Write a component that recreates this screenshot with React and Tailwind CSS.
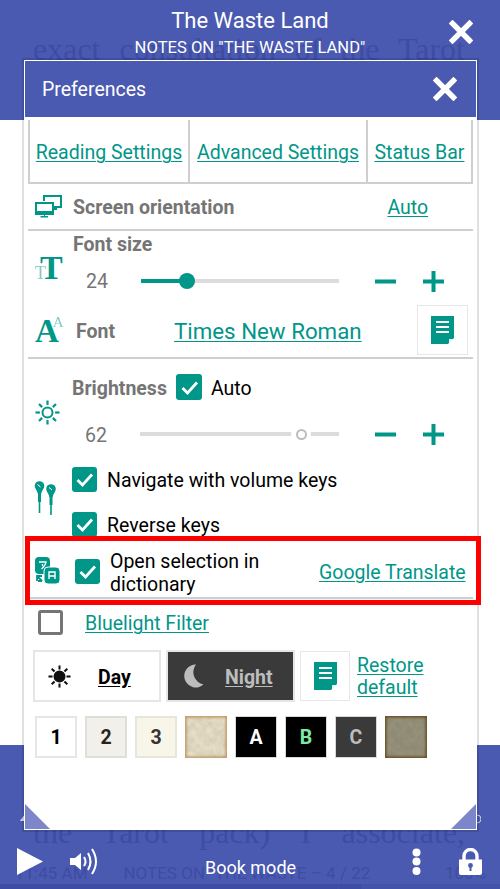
import React from "react";

const TEAL = "#009688";

function XIcon({ size = 24 }) {
  return (
    <svg width={size} height={size} viewBox="0 0 24 24" className="block">
      <path d="M3.5 3.5 L20.5 20.5 M20.5 3.5 L3.5 20.5" stroke="#fff" strokeWidth="5.4" strokeLinecap="square" fill="none" />
    </svg>
  );
}

function Check({ className = "w-[25px] h-[25px]" }) {
  return (
    <span className={`${className} shrink-0 rounded-[3px] bg-[#009688] flex items-center justify-center`}>
      <svg width="19" height="19" viewBox="0 0 19 19">
        <path d="M2.5 10 L7.5 15 L17 4.5" stroke="#fff" strokeWidth="2.8" fill="none" />
      </svg>
    </span>
  );
}

function Minus() {
  return (
    <svg width="21" height="21" viewBox="0 0 21 21" className="block shrink-0">
      <rect x="0" y="8.5" width="21" height="4" fill={TEAL} />
    </svg>
  );
}
function Plus() {
  return (
    <svg width="21" height="21" viewBox="0 0 21 21" className="block shrink-0">
      <path d="M0 8.5H8.5V0H12.5V8.5H21V12.5H12.5V21H8.5V12.5H0Z" fill={TEAL} />
    </svg>
  );
}

function DocIcon() {
  return (
    <svg width="23" height="28" viewBox="0 0 23 28" className="block">
      <path d="M0 0H23V22L17 28H0Z" fill={TEAL} />
      <path d="M5 6H18M5 11H18M5 16H18" stroke="#fff" strokeWidth="2" />
      <path d="M18 28L23 23H18Z" fill="#fff" opacity="0.85" />
    </svg>
  );
}

function Monitors() {
  return (
    <svg width="27" height="23" viewBox="0 0 27 23" className="block">
      <g fill="none" stroke={TEAL} strokeWidth="2">
        <path d="M9 6V1H26V12H19" />
        <rect x="1" y="8" width="17" height="11" fill="#fff" />
        <path d="M19 14H22" />
      </g>
      <path d="M9 19V21H5.5V22.5H13V21H10V19Z" fill={TEAL} />
      <rect x="1" y="16" width="17" height="3" fill={TEAL} />
    </svg>
  );
}

function Sun({ color = TEAL, filled = false, size = 25 }) {
  const rays = [0, 45, 90, 135, 180, 225, 270, 315];
  return (
    <svg width={size} height={size} viewBox="0 0 25 25" className="block">
      <circle cx="12.5" cy="12.5" r={filled ? 5.5 : 5} fill={filled ? color : "none"} stroke={color} strokeWidth="2" />
      {rays.map((a) => (
        <rect key={a} x="11.4" y="0.5" width="2.2" height="4.4" fill={color} transform={`rotate(${a} 12.5 12.5)`} />
      ))}
    </svg>
  );
}

function Earbuds() {
  return (
    <svg width="23" height="36" viewBox="0 0 23 36" className="block">
      <g fill={TEAL}>
        <circle cx="5.5" cy="5" r="4.8" />
        <path d="M2 8H9L7 13H4Z" />
        <rect x="4" y="12" width="3" height="9" />
        <rect x="4.7" y="21" width="1.6" height="11" />
        <circle cx="17" cy="8" r="4.8" />
        <path d="M13.5 11H20.5L18.5 16H15.5Z" />
        <rect x="15.5" y="15" width="3" height="9" />
        <rect x="16.2" y="24" width="1.6" height="10" />
      </g>
      <path d="M3.5 3.5L6.5 6M15 6.5L18 9" stroke="#fff" strokeWidth="1" />
    </svg>
  );
}

function TranslateIcon() {
  return (
    <svg width="25" height="28" viewBox="0 0 25 28" className="block">
      <rect x="0" y="0" width="15" height="17" rx="4" fill={TEAL} />
      <path d="M4 5H11C10.5 8 9 10 6.5 12M7.5 7V9" stroke="#fff" strokeWidth="1.3" fill="none" />
      <rect x="9" y="10" width="16" height="17" rx="4" fill={TEAL} stroke="#fff" strokeWidth="1" />
      <path d="M14 22V15H20V22M14 19H20" stroke="#fff" strokeWidth="1.4" fill="none" />
      <path d="M2 19L7 24M2 24V19H7M7 24H3" stroke={TEAL} strokeWidth="1.8" fill="none" />
    </svg>
  );
}

function Moon() {
  return (
    <svg width="21" height="24" viewBox="0 0 21 24" className="block">
      <path d="M13 0.5A11.5 11.5 0 1 0 20.5 20.5A12.5 12.5 0 0 1 13 0.5Z" fill="#bdbdbd" />
    </svg>
  );
}

function Paper({ dark }) {
  const id = dark ? "pd" : "pl";
  return (
    <svg width="42" height="42" viewBox="0 0 42 42" className="block shrink-0">
      <defs>
        <filter id={id + "f"}>
          <feTurbulence type="fractalNoise" baseFrequency="0.14" numOctaves="4" seed="7" />
          <feColorMatrix values="0 0 0 0 0.45  0 0 0 0 0.38  0 0 0 0 0.25  1.1 0 0 0 -0.3" />
        </filter>
        <filter id={id + "b"}>
          <feGaussianBlur stdDeviation="1.2" />
        </filter>
        <clipPath id={id + "c"}>
          <rect width="42" height="42" />
        </clipPath>
      </defs>
      <g clipPath={`url(#${id}c)`}>
        <rect width="42" height="42" fill={dark ? "#8c8974" : "#e6dfc9"} />
        <rect width="42" height="42" filter={`url(#${id}f)`} opacity="0.6" />
        <rect
          x="0"
          y="0"
          width="42"
          height="42"
          fill="none"
          stroke={dark ? "#634a24" : "#bd9560"}
          strokeWidth="3"
          filter={`url(#${id}b)`}
        />
      </g>
    </svg>
  );
}

function Swatch({ className, children }) {
  return (
    <span className={`w-[42px] h-[42px] shrink-0 flex items-center justify-center text-[19.5px] font-bold ${className}`}>
      {children}
    </span>
  );
}

function Slider({ className, children }) {
  return <div className={`relative h-[4px] ${className}`}>{children}</div>;
}

const link = "text-[#009688] underline underline-offset-[2px] decoration-[1px]";
const label = "text-[19.5px] font-bold text-[#757575]";

export default function App() {
  return (
    <div className="relative w-[500px] h-[889px] overflow-hidden bg-white flex flex-col justify-between font-['Roboto',sans-serif]">
      {/* top bar */}
      <header className="relative h-[120px] bg-[#4a5ab1] text-white flex flex-col items-center">
        <p className="absolute left-[33px] right-[35px] top-[30px] font-['Liberation_Serif',serif] text-[32px] leading-[38px] text-[#3e4ca3] [text-align:justify] [text-align-last:justify]">
          exact consultation of the Tarot
        </p>
        <h1 className="relative mt-[7px] text-[22px] leading-[28px] font-normal">The Waste Land</h1>
        <h2 className="relative mt-[3px] text-[16.6px] leading-[20px] font-normal">NOTES ON "THE WASTE LAND"</h2>
        <span className="absolute left-[449px] top-[20px]">
          <XIcon />
        </span>
      </header>

      {/* bottom bar */}
      <footer className="relative h-[144px] bg-[#4a5ab1]">
        <p className="absolute left-[33px] right-[35px] top-[68px] font-['Liberation_Serif',serif] text-[32px] leading-[38px] text-[#3e4ca3] [text-align:justify] [text-align-last:justify]">
          the Tarot pack) I associate,
        </p>
        <div className="absolute left-[15px] right-[14px] top-[118px] flex text-[17px] leading-[20px] text-[#3e4ca3]">
          <span className="w-[109px]">11:45 AM</span>
          <span className="w-[323px]">NOTES ON "THE WASTE – 4 / 22</span>
          <span>100%</span>
        </div>
        <div className="absolute left-0 right-0 bottom-0 h-[5px] bg-[#4453aa] flex">
          <span className="w-[338px] bg-[#3e4ca3]" />
          <span className="w-[1px]" />
          <span className="w-[22px] bg-[#3e4ca3]" />
        </div>
        <div className="relative pt-[103px] pl-[17px] flex items-start text-white">
          <svg width="26" height="27" viewBox="0 0 26 27" className="block">
            <path d="M0 0L26 13.5L0 27Z" fill="#fff" />
          </svg>
          <svg width="28" height="27" viewBox="0 0 28 27" className="block ml-[27px]">
            <path d="M0 10H5L11 5V22L5 17H0Z" fill="#fff" />
            <g fill="none" stroke="#fff" strokeWidth="2">
              <path d="M14 9Q17 13.5 14 18" />
              <path d="M18 5Q23 13.5 18 22" />
              <path d="M22 1Q30 13.5 22 26" />
            </g>
          </svg>
          <span className="ml-[107px] mt-[8px] text-[18px] leading-[24px]">Book mode</span>
          <svg width="9" height="27" viewBox="0 0 9 27" className="block ml-[116px]">
            <circle cx="4.5" cy="4.5" r="4" fill="#fff" />
            <circle cx="4.5" cy="13.5" r="4" fill="#fff" />
            <circle cx="4.5" cy="23" r="4" fill="#fff" />
          </svg>
          <svg width="23" height="27" viewBox="0 0 23 27" className="block ml-[38px]">
            <path d="M5 12V8A6.5 6.5 0 0 1 18 8V12" fill="none" stroke="#fff" strokeWidth="3.4" />
            <path d="M0 11.5H23V25A2 2 0 0 1 21 27H2A2 2 0 0 1 0 25Z" fill="#fff" />
            <circle cx="11.5" cy="17.5" r="2.4" fill="#4a5ab1" />
            <rect x="10.5" y="18" width="2" height="5" fill="#4a5ab1" />
          </svg>
        </div>
      </footer>

      {/* bits of page controls peeking out from under the dialog */}
      <svg width="5" height="8" viewBox="0 0 5 8" className="absolute left-[20px] top-[814px]">
        <path d="M5 0V7H0Z" fill="#fff" opacity="0.8" />
      </svg>
      <svg width="4" height="10" viewBox="0 0 4 10" className="absolute left-[477px] top-[814px]">
        <path d="M0 1A4 4 0 0 1 0 9" fill="none" stroke="#fff" strokeWidth="1" opacity="0.7" />
      </svg>

      {/* dialog */}
      <section className="absolute left-[24px] top-[60px] w-[453px] h-[770px] bg-white border border-white shadow-[0_0_0_2px_rgba(0,0,0,0.12)] flex flex-col">
        <div className="h-[56px] shrink-0 bg-[#4a5ab1] flex items-center justify-between pl-[17px] pr-[19px] text-white">
          <span className="pt-[2px] text-[19.5px] leading-[24px]">Preferences</span>
          <XIcon />
        </div>

        <div className="flex flex-col px-[3px] pt-[3px] text-[19.5px] leading-[23px]">
          {/* tabs */}
          <div className="h-[64px] flex border-x-2 border-b-2 border-[#cfcfcf]">
            <div className="w-[160px] flex items-center justify-center border-r-2 border-[#cfcfcf]">
              <span className={`${link} pt-[2px]`}>Reading Settings</span>
            </div>
            <div className="w-[178px] flex items-center justify-center border-r-2 border-[#cfcfcf]">
              <span className={`${link} pt-[2px]`}>Advanced Settings</span>
            </div>
            <div className="flex-1 flex items-center justify-center">
              <span className={`${link} pt-[2px]`}>Status Bar</span>
            </div>
          </div>

          {/* orientation */}
          <div className="h-[47px] flex items-center pl-[7px] border-b-2 border-[#cfcfcf]">
            <Monitors />
            <span className={`${label} ml-[11px] pt-[2px]`}>Screen orientation</span>
            <span className={`${link} ml-[153px] pt-[2px]`}>Auto</span>
          </div>

          {/* font size */}
          <div className="h-[74px] flex">
            <div className="w-[45px] pl-[7px] flex items-center">
              <span className="font-['Liberation_Serif',serif] flex items-baseline text-[#009688] leading-none">
                <span className="text-[18px] opacity-50 -mr-[6px]">T</span>
                <span className="text-[34px] font-bold">T</span>
              </span>
            </div>
            <div className="flex flex-col">
              <div className={`${label} h-[26px] flex items-center`}>Font size</div>
              <div className="mt-[5px] h-[38px] flex items-center">
                <span className="w-[55px] pl-[13px] text-[#757575] box-content">24</span>
                <Slider className="w-[198px] bg-[#dcdcdc]">
                  <span className="absolute left-0 top-0 h-[4px] w-[46px] bg-[#009688]" />
                  <span className="absolute left-[38px] -top-[6px] w-[16px] h-[16px] rounded-full bg-[#009688]" />
                </Slider>
                <span className="ml-[36px]"><Minus /></span>
                <span className="ml-[27px]"><Plus /></span>
              </div>
            </div>
          </div>

          {/* font */}
          <div className="h-[54px] flex border-b-2 border-[#cfcfcf]">
            <div className="w-[48px] pl-[7px] flex items-center">
              <span className="font-['Liberation_Serif',serif] flex items-start text-[#009688] leading-none">
                <span className="text-[33px] font-bold">A</span>
                <span className="text-[15px] opacity-50 -ml-[6px]">A</span>
              </span>
            </div>
            <div className={`${label} w-[98px] flex items-center`}>Font</div>
            <div className="flex items-center">
              <span className={`${link} text-[22.3px] leading-[28px]`}>Times New Roman</span>
            </div>
            <div className="ml-auto mr-[5px] w-[51px] h-[50px] border border-[#e6e6e6] flex items-center justify-center">
              <DocIcon />
            </div>
          </div>

          {/* brightness */}
          <div className="h-[106px] flex">
            <div className="w-[44px] pl-[7px] flex items-center">
              <Sun />
            </div>
            <div className="flex flex-col pt-[15px]">
              <div className="h-[26px] flex items-center">
                <span className={`${label} w-[104px] pt-[2px]`}>Brightness</span>
                <Check className="w-[26px] h-[26px]" />
                <span className="ml-[9px] pt-[2px] text-black">Auto</span>
              </div>
              <div className="mt-[21px] h-[26px] flex items-center">
                <span className="w-[55px] pl-[13px] pt-[2px] text-[#757575] box-content">62</span>
                <Slider className="w-[199px] bg-[#dcdcdc]">
                  <span className="absolute left-[151px] -top-[8px] w-[20px] h-[20px] rounded-full bg-white flex items-center justify-center">
                    <span className="block w-[11px] h-[11px] rounded-full border-2 border-[#bdbdbd]" />
                  </span>
                </Slider>
                <span className="ml-[36px]"><Minus /></span>
                <span className="ml-[27px]"><Plus /></span>
              </div>
            </div>
          </div>

          {/* volume keys */}
          <div className="h-[72px] flex">
            <div className="w-[44px] pl-[6px] pb-[4px] flex items-center">
              <Earbuds />
            </div>
            <div className="flex flex-col pt-[2px] gap-[20px] text-black">
              <div className="h-[25px] flex items-center gap-[10px]">
                <Check />
                <span className="pt-[2px]">Navigate with volume keys</span>
              </div>
              <div className="h-[25px] flex items-center gap-[10px]">
                <Check />
                <span className="pt-[2px]">Reverse keys</span>
              </div>
            </div>
          </div>

          {/* dictionary */}
          <div className="h-[62px] flex items-center pl-[7px] pt-[8px] border-b-2 border-[#cfcfcf] bg-white">
            <TranslateIcon />
            <span className="ml-[15px]"><Check /></span>
            <span className="ml-[10px] pt-[4px] w-[209px] text-black">Open selection in dictionary</span>
            <span className={`${link} pt-[2px]`}>Google Translate</span>
          </div>

          {/* bluelight */}
          <div className="h-[51px] flex items-start pl-[10px] pt-[11px]">
            <span className="w-[25px] h-[25px] rounded-[3px] border-[3px] border-[#757575]" />
            <span className={`${link} ml-[22px] mt-[1px] leading-[25px]`}>Bluelight Filter</span>
          </div>

          {/* day / night */}
          <div className="flex items-center pl-[5px]">
            <div className="w-[128px] h-[52px] border-2 border-[#e6e6e6] flex items-center pl-[13px]">
              <Sun color="#111" filled size={23} />
              <span className="ml-[27px] pt-[2px] font-bold text-black underline underline-offset-[2px]">Day</span>
            </div>
            <div className="ml-[5px] w-[129px] h-[52px] border-2 border-[#e6e6e6] bg-[#3a3a3a] flex items-center pl-[15px]">
              <Moon />
              <span className="ml-[21px] pt-[2px] font-bold text-[#bdbdbd] underline underline-offset-[2px]">Night</span>
            </div>
            <div className="ml-[5px] w-[50px] h-[50px] border border-[#e6e6e6] flex items-center justify-center">
              <DocIcon />
            </div>
            <span className={`${link} ml-[7px] pt-[2px] leading-[22px] w-[80px]`}>Restore default</span>
          </div>

          {/* themes */}
          <div className="mt-[14px] pl-[7px] flex gap-[8px]">
            <Swatch className="border-2 bg-white border-[#e6e6e6] text-black">1</Swatch>
            <Swatch className="border-2 bg-[#f2f0ea] border-[#e0ded8] text-[#2a2418]">2</Swatch>
            <Swatch className="border-2 bg-[#f8f5e9] border-[#e8e6dc] text-[#333]">3</Swatch>
            <Paper />
            <Swatch className="border bg-black border-[#d8d8d8] text-white">A</Swatch>
            <Swatch className="border bg-black border-[#d8d8d8] text-[#7ceaa0]">B</Swatch>
            <Swatch className="border bg-[#3a3a3a] border-[#d8d8d8] text-[#bdbdbd]">C</Swatch>
            <Paper dark />
          </div>
        </div>

        {/* resize corners */}
        <svg width="25" height="25" viewBox="0 0 25 25" className="absolute left-0 bottom-0">
          <path d="M0 0L25 25H0Z" fill="#7d86c9" />
        </svg>
        <svg width="25" height="25" viewBox="0 0 25 25" className="absolute right-0 bottom-0">
          <path d="M25 0V25H0Z" fill="#7d86c9" />
        </svg>
      </section>

      {/* red annotation */}
      <div className="absolute left-[25px] top-[536px] w-[456px] h-[69px] border-[5px] border-[#ff0000]" />
    </div>
  );
}
